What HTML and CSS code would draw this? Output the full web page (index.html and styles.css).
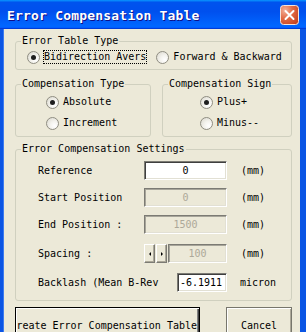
FILE: index.html
```html
<!DOCTYPE html>
<html lang="en">

<head>
    <meta charset="UTF-8">
    <title>Error Compensation Table</title>
    <link rel="stylesheet" href="styles.css">
</head>

<body>
    <div class="window">
        <div class="titlebar">
            <span class="title">Error Compensation Table</span>
            <button class="close" aria-label="Close">
                <svg width="19" height="20" viewBox="0 0 19 20">
                    <defs>
                        <radialGradient id="cg" cx="25%" cy="25%" r="95%">
                            <stop offset="0" stop-color="#F2B09A" />
                            <stop offset="0.45" stop-color="#E26B45" />
                            <stop offset="1" stop-color="#C4401E" />
                        </radialGradient>
                    </defs>
                    <rect x="0.5" y="0.5" width="18" height="19" rx="3" fill="url(#cg)" stroke="#F4E4DC" />
                    <path d="M5.5 6 L13.5 14 M13.5 6 L5.5 14" stroke="#fff" stroke-width="2" stroke-linecap="round" />
                </svg>
            </button>
        </div>

        <div class="client">
            <!-- table type -->
            <fieldset class="group group-type">
                <legend>Error Table Type</legend>
                <div class="body radios-row">
                    <label class="radio"><span class="dot checked"></span><span class="text focus">Bidirection Avers</span></label>
                    <label class="radio"><span class="dot"></span><span class="text">Forward &amp; Backward</span></label>
                </div>
            </fieldset>

            <div class="pair">
                <fieldset class="group group-comp">
                    <legend>Compensation Type</legend>
                    <div class="body radios-col">
                        <label class="radio"><span class="dot checked"></span><span class="text">Absolute</span></label>
                        <label class="radio"><span class="dot"></span><span class="text">Increment</span></label>
                    </div>
                </fieldset>
                <fieldset class="group group-sign">
                    <legend>Compensation Sign</legend>
                    <div class="body radios-col">
                        <label class="radio"><span class="dot checked"></span><span class="text">Plus+</span></label>
                        <label class="radio"><span class="dot"></span><span class="text">Minus--</span></label>
                    </div>
                </fieldset>
            </div>

            <!-- settings -->
            <fieldset class="group group-settings">
                <legend>Error Compensation Settings</legend>
                <div class="body settings">
                    <div class="row">
                        <span class="lbl">Reference</span>
                        <div class="ctrl"><input class="field" type="text" value="0"></div>
                        <span class="unit">(mm)</span>
                    </div>
                    <div class="row">
                        <span class="lbl">Start Position</span>
                        <div class="ctrl"><input class="field" type="text" value="0" disabled></div>
                        <span class="unit">(mm)</span>
                    </div>
                    <div class="row">
                        <span class="lbl">End Position :</span>
                        <div class="ctrl"><input class="field" type="text" value="1500" disabled></div>
                        <span class="unit">(mm)</span>
                    </div>
                    <div class="row row-wide">
                        <span class="lbl">Spacing :</span>
                        <div class="ctrl spinner">
                            <span class="spin"><i class="arrow-left"></i></span>
                            <span class="spin"><i class="arrow-right"></i></span>
                            <input class="field" type="text" value="100" disabled>
                        </div>
                        <span class="unit">(mm)</span>
                    </div>
                    <div class="row row-wide">
                        <span class="lbl">Backlash (Mean B-Rev</span>
                        <div class="ctrl"><input class="field field-short" type="text" value="-6.1911"></div>
                        <span class="unit unit-micron">micron</span>
                    </div>
                </div>
            </fieldset>

            <div class="buttons">
                <button class="btn btn-default">reate Error Compensation Table</button>
                <button class="btn btn-cancel">Cancel</button>
            </div>
        </div>
    </div>
</body>

</html>
```

FILE: styles.css
```css
body {
    margin: 0;
    width: 306px;
    height: 332px;
    overflow: hidden;
    font-family: "DejaVu Sans Mono", "Liberation Mono", monospace;
    font-size: 10px;
    color: #000;
}

.window {
    height: 332px;
    display: flex;
    flex-direction: column;
    background: #0B55E4;
}

.titlebar {
    height: 29px;
    flex: none;
    display: flex;
    align-items: center;
    justify-content: space-between;
    padding: 0 7px 0 7px;
    background: linear-gradient(#0997FF 0, #0053EE 8%, #0050EE 40%, #0066FF 88%, #0066FF 93%, #005BFF 95%, #003DD7 96%, #003DD7 100%);
}

.title {
    padding-top: 2px;
    color: #fff;
    font-weight: bold;
    font-size: 13px;
    letter-spacing: 0.2px;
    text-shadow: 1px 1px #0F1089;
}

.close {
    width: 19px;
    height: 20px;
    margin: 1px 0 0 0;
    padding: 0;
    border: none;
    background: none;
    display: block;
}

.close svg {
    display: block;
}

.client {
    flex: 1;
    margin: 0 6px 0 4px;
    background: #ECE9D8;
    box-shadow: -1px 0 #3D7BEF;
}

.group {
    margin: 0;
    padding: 0;
    min-width: 0;
    border: 1px solid #D0D0BF;
    border-radius: 3px;
}

.group legend {
    margin-left: 5px;
    padding: 0 1px;
    line-height: 12px;
}

.group-type {
    margin: 6px 8px 0 11px;
}

.group-type .body {
    padding: 3px 0 5px 11px;
}

.radios-row {
    display: flex;
    gap: 9px;
}

.radios-col {
    display: flex;
    flex-direction: column;
    gap: 7px;
}

.radio {
    display: flex;
    align-items: center;
    height: 14px;
}

.dot {
    width: 13px;
    height: 13px;
    flex: none;
    box-sizing: border-box;
    border: 1px solid #8F8D82;
    border-radius: 50%;
    margin-right: 3px;
    background: radial-gradient(circle at 70% 70%, #fff 0, #F4F3EE 40%, #D8D6CB 100%);
    display: flex;
    align-items: center;
    justify-content: center;
}

.dot.checked::after {
    content: "";
    width: 5px;
    height: 5px;
    border-radius: 50%;
    background: #1E1E1E;
}

.text {
    border: 1px solid transparent;
    line-height: 12px;
    white-space: nowrap;
}

.text.focus {
    border: 1px dotted #000;
}

.pair {
    display: flex;
    gap: 11px;
    margin: 8px 8px 0 11px;
}

.group-comp {
    width: 136px;
    box-sizing: border-box;
}

.group-sign {
    flex: 1;
}

.group-comp .body {
    padding: 5px 0 6px 30px;
}

.group-sign .body {
    padding: 5px 0 6px 37px;
}

.group-settings {
    margin: 6px 8px 0 11px;
}

.settings {
    padding: 6px 0 8px 22px;
}

.row {
    display: flex;
    align-items: center;
    height: 19px;
    margin-top: 8px;
}

.row:first-child {
    margin-top: 0;
}

.row-wide {
    margin-top: 10px;
}

.lbl {
    width: 106px;
    flex: none;
    white-space: nowrap;
}

.ctrl {
    width: 83px;
    flex: none;
    display: flex;
    justify-content: flex-end;
}

.unit {
    margin-left: 14px;
}

.unit-micron {
    margin-left: 13px;
}

.field {
    box-sizing: border-box;
    width: 100%;
    height: 19px;
    margin: 0;
    padding: 0 2px;
    font: inherit;
    text-align: center;
    color: #000;
    background: #fff;
    border: 1px solid;
    border-color: #7C7B74 #FFFFFF #FFFFFF #7C7B74;
    box-shadow: inset 1px 1px #3F3F3F, inset -1px -1px #E2E0D4;
    outline: none;
}

.field:disabled {
    color: #ACA899;
    background: #ECE9D8;
    box-shadow: inset 1px 1px #A7A59A, inset -1px -1px #E2E0D4;
}

.field-short {
    width: 50px;
    text-align: left;
    padding-left: 2px;
}

.spinner {
    gap: 1px;
}

.spin {
    width: 11px;
    height: 19px;
    flex: none;
    box-sizing: border-box;
    border: 1px solid;
    border-color: #FFFFFF #7C7B74 #7C7B74 #FFFFFF;
    box-shadow: inset -1px -1px #ACA899;
    display: flex;
    align-items: center;
    justify-content: center;
}

.arrow-left,
.arrow-right {
    width: 0;
    height: 0;
    border-top: 2px solid transparent;
    border-bottom: 2px solid transparent;
}

.arrow-left {
    border-right: 2px solid #000;
}

.arrow-right {
    border-left: 2px solid #000;
}

.spinner .field {
    width: 59px;
}

.buttons {
    display: flex;
    justify-content: space-between;
    margin: 6px 8px 0 11px;
}

.btn {
    height: 36px;
    margin: 0;
    padding: 0;
    font: inherit;
    color: #000;
    background: #ECE9D8;
    box-sizing: border-box;
    white-space: nowrap;
}

.btn-default {
    width: 185px;
    border: 1px solid #000;
    box-shadow: inset 1px 1px #fff, inset -1px -1px #404040, inset -2px -2px #808080;
    text-align: right;
    padding-right: 2px;
}

.btn-cancel {
    width: 66px;
    border: 1px solid #77766C;
    box-shadow: inset 1px 1px #fff, inset -1px -1px #ACA899;
}
```
